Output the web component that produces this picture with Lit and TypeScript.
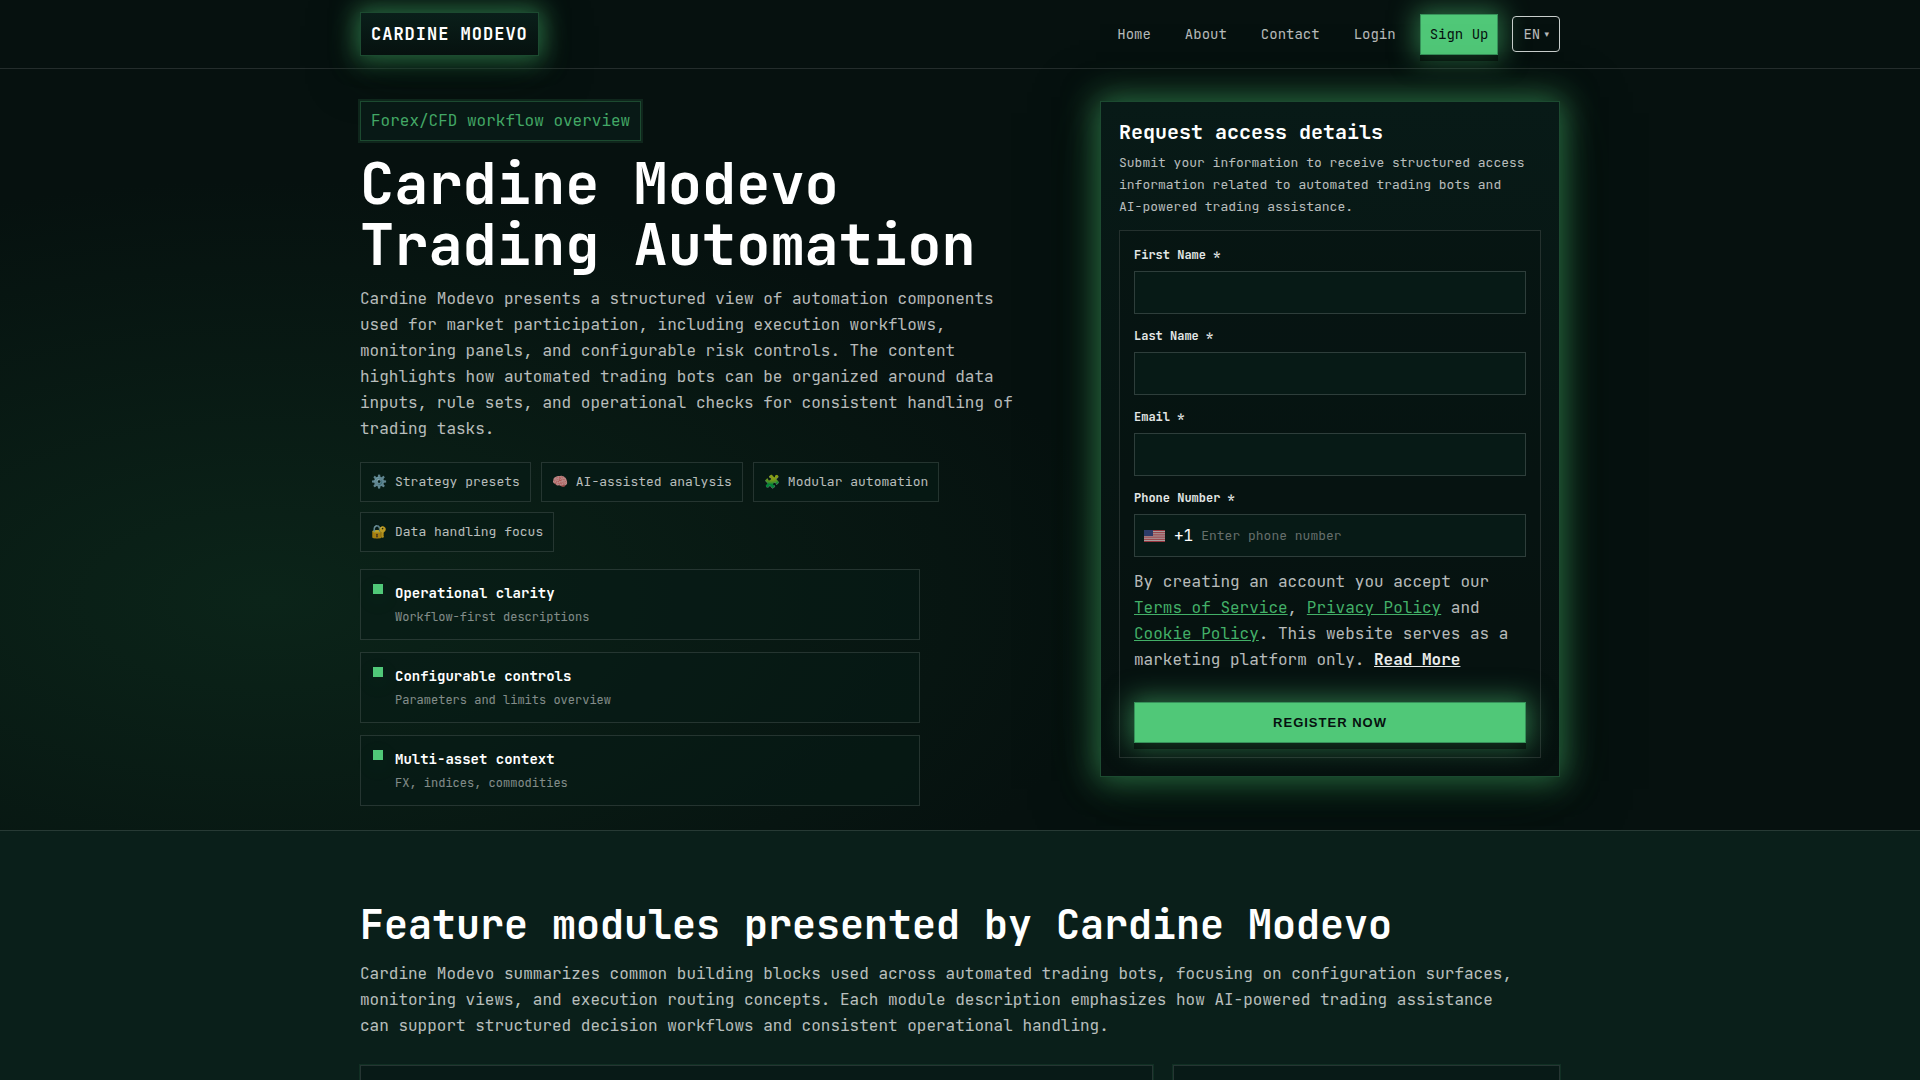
import { LitElement, html, css, svg } from "lit";
import { customElement } from "lit/decorators.js";

const shared = css`
  *,
  *::before,
  *::after {
    box-sizing: border-box;
  }
  h1,
  h2,
  p,
  ul {
    margin: 0;
    padding: 0;
  }
`;

const navLinks = ["Home", "About", "Contact", "Login"];

const chips = [
  { icon: "⚙️", label: "Strategy presets" },
  { icon: "🧠", label: "AI-assisted analysis" },
  { icon: "🧩", label: "Modular automation" },
  { icon: "🔐", label: "Data handling focus" },
];

const points = [
  { title: "Operational clarity", note: "Workflow-first descriptions" },
  { title: "Configurable controls", note: "Parameters and limits overview" },
  { title: "Multi-asset context", note: "FX, indices, commodities" },
];

const fields = [
  { id: "first-name", label: "First Name *", type: "text" },
  { id: "last-name", label: "Last Name *", type: "text" },
  { id: "email", label: "Email *", type: "email" },
];

@customElement("site-header")
class SiteHeader extends LitElement {
  static styles = [
    shared,
    css`
      :host {
        display: block;
        border-bottom: 1px solid var(--line);
        background: rgba(6, 17, 15, 0.5);
      }
      .bar {
        max-width: 1200px;
        margin: 0 auto;
        padding: 12px 0;
        display: flex;
        align-items: center;
        justify-content: space-between;
      }
      .logo {
        padding: 8px 10px;
        border: 1px solid var(--line-green);
        background: linear-gradient(180deg, #0a1f1a, #06110f);
        box-shadow: var(--glow);
        color: #fff;
        font-size: 17px;
        font-weight: 700;
        letter-spacing: 1px;
        text-decoration: none;
      }
      .nav {
        display: flex;
        align-items: center;
        gap: 14px;
        font-size: 14px;
        line-height: 23px;
      }
      .link {
        padding: 8px 9px;
        border: 1px solid transparent;
        color: var(--text);
        text-decoration: none;
      }
      .signup {
        border-color: var(--button-line);
        background: var(--green);
        box-shadow: var(--button-glow);
        color: #06110f;
      }
      .lang {
        display: flex;
        align-items: center;
        gap: 4px;
        height: 36px;
        padding: 0 10px;
        border: 1px solid #c9cfcd;
        border-radius: 4px;
        color: var(--text);
      }
      .select {
        appearance: none;
        padding: 0;
        border: 0;
        background: transparent;
        color: inherit;
        font: inherit;
      }
      .caret {
        font-family: "DejaVu Sans", sans-serif;
        font-size: 9px;
      }
    `,
  ];

  render() {
    return html`
      <header class="bar">
        <a class="logo" href="#">CARDINE MODEVO</a>
        <nav class="nav">
          ${navLinks.map((l) => html`<a class="link" href="#">${l}</a>`)}
          <a class="link signup" href="#">Sign Up</a>
          <label class="lang">
            <select class="select" aria-label="Language">
              <option>EN</option>
            </select>
            <span class="caret">▾</span>
          </label>
        </nav>
      </header>
    `;
  }
}

@customElement("intro-column")
class IntroColumn extends LitElement {
  static styles = [
    shared,
    css`
      :host {
        display: block;
      }
      .badge {
        display: inline-block;
        padding: 6px 10px;
        border: 1px solid var(--line-green);
        outline: 2px solid rgba(80, 200, 120, 0.12);
        background: rgba(10, 31, 26, 0.6);
        color: #43a866;
      }
      .title {
        margin-top: 12px;
        color: #fff;
        font-size: 57px;
        line-height: 61px;
        font-weight: 700;
      }
      .lead {
        max-width: 660px;
        margin-top: 11px;
        color: var(--text);
      }
      .chips {
        display: flex;
        flex-wrap: wrap;
        gap: 10px;
        margin-top: 20px;
        list-style: none;
      }
      .chip {
        display: flex;
        gap: 8px;
        padding: 8px 10px;
        border: 1px solid var(--line);
        background: var(--panel);
        color: var(--text);
        font-size: 13px;
        line-height: 22px;
      }
      .icon {
        width: 16px;
      }
      .points {
        display: grid;
        gap: 12px;
        max-width: 560px;
        margin-top: 17px;
        list-style: none;
      }
      .point {
        display: flex;
        gap: 12px;
        padding: 12px;
        border: 1px solid var(--line);
        background: var(--panel);
      }
      .mark {
        flex: none;
        width: 10px;
        height: 10px;
        margin-top: 2px;
        background: var(--green);
        box-shadow: 0 6px 24px rgba(80, 200, 120, 0.12);
      }
      .name {
        color: #fff;
        font-size: 14px;
        line-height: 23px;
        font-weight: 700;
      }
      .note {
        margin-top: 2px;
        color: var(--muted);
        font-size: 12px;
        line-height: 20px;
      }
    `,
  ];

  render() {
    return html`
      <span class="badge">Forex/CFD workflow overview</span>
      <h1 class="title">Cardine Modevo Trading Automation</h1>
      <p class="lead">
        Cardine Modevo presents a structured view of automation components used for market
        participation, including execution workflows, monitoring panels, and configurable risk
        controls. The content highlights how automated trading bots can be organized around data
        inputs, rule sets, and operational checks for consistent handling of trading tasks.
      </p>
      <ul class="chips">
        ${chips.map(
          (c) => html`<li class="chip"><span class="icon">${c.icon}</span><span>${c.label}</span></li>`
        )}
      </ul>
      <ul class="points">
        ${points.map(
          (p) => html`
            <li class="point">
              <span class="mark"></span>
              <div>
                <p class="name">${p.title}</p>
                <p class="note">${p.note}</p>
              </div>
            </li>
          `
        )}
      </ul>
    `;
  }
}

@customElement("access-form")
class AccessForm extends LitElement {
  static styles = [
    shared,
    css`
      :host {
        display: block;
        padding: 18px;
        border: 1px solid var(--line-green);
        background: linear-gradient(180deg, #081a17, #06110f);
        box-shadow: var(--glow-large);
      }
      .title {
        color: #fff;
        font-size: 20px;
        line-height: 24px;
        font-weight: 700;
      }
      .sub {
        max-width: 410px;
        margin-top: 8px;
        color: var(--text);
        font-size: 13px;
        line-height: 22px;
      }
      .form {
        display: flex;
        flex-direction: column;
        gap: 12px;
        margin-top: 12px;
        padding: 14px;
        border: 1px solid var(--line);
        background: rgba(6, 17, 15, 0.5);
      }
      .field {
        display: flex;
        flex-direction: column;
        gap: 6px;
      }
      .label {
        color: #e3e7e6;
        font-size: 12px;
        line-height: 20px;
        font-weight: 700;
      }
      .input {
        width: 100%;
        height: 43px;
        padding: 0 10px;
        border: 1px solid var(--line-strong);
        background: #071a16;
        color: #fff;
        font: inherit;
        font-size: 13px;
      }
      .phone {
        display: flex;
        align-items: center;
        height: 43px;
        padding: 0 9px;
        border: 1px solid var(--line-strong);
        background: #071a16;
      }
      .flag {
        flex: none;
        margin-right: 9px;
        opacity: 0.7;
      }
      .code {
        margin-right: 8px;
        color: #fff;
      }
      .number {
        flex: 1;
        min-width: 0;
        padding: 0;
        border: 0;
        background: transparent;
        color: #fff;
        font: inherit;
        font-size: 13px;
      }
      .number::placeholder {
        color: #666f6c;
      }
      .terms {
        color: var(--text);
      }
      .policy {
        color: #43b068;
      }
      .more {
        color: #e9eceb;
        font-weight: 700;
      }
      .submit {
        height: 41px;
        margin-top: 17px;
        border: 1px solid var(--button-line);
        background: var(--green);
        box-shadow: var(--button-glow);
        color: #06110f;
        font-family: "Liberation Sans", Arial, sans-serif;
        font-size: 13px;
        font-weight: 700;
        letter-spacing: 1px;
      }
    `,
  ];

  private flag() {
    return html`
      <svg class="flag" width="21" height="12" viewBox="0 0 21 12" role="img" aria-label="United States">
        <rect width="21" height="12" fill="#f4f4f4" />
        ${[0, 1, 2, 3, 4, 5, 6].map(
          (i) => svg`<rect y=${(i * 24) / 13} width="21" height=${12 / 13} fill="#d0303f" />`
        )}
        <rect width="9" height="6" fill="#3c4a8c" />
      </svg>
    `;
  }

  render() {
    return html`
      <h2 class="title">Request access details</h2>
      <p class="sub">
        Submit your information to receive structured access information related to automated
        trading bots and AI-powered trading assistance.
      </p>
      <form class="form">
        ${fields.map(
          (f) => html`
            <div class="field">
              <label class="label" for=${f.id}>${f.label}</label>
              <input class="input" id=${f.id} type=${f.type} />
            </div>
          `
        )}
        <div class="field">
          <label class="label" for="phone">Phone Number *</label>
          <div class="phone">
            ${this.flag()}
            <span class="code">+1</span>
            <input class="number" id="phone" type="tel" placeholder="Enter phone number" />
          </div>
        </div>
        <p class="terms">
          By creating an account you accept our <a class="policy" href="#">Terms of Service</a>,
          <a class="policy" href="#">Privacy Policy</a> and
          <a class="policy" href="#">Cookie Policy</a>. This website serves as a marketing platform
          only. <a class="more" href="#">Read More</a>
        </p>
        <button class="submit" type="button">REGISTER NOW</button>
      </form>
    `;
  }
}

@customElement("feature-section")
class FeatureSection extends LitElement {
  static styles = [
    shared,
    css`
      :host {
        display: block;
        position: relative;
        border-top: 1px solid var(--line);
        background: #0a1f1a;
      }
      .inner {
        max-width: 1200px;
        margin: 0 auto;
        padding: 70px 0;
      }
      .title {
        color: #fff;
        font-size: 40px;
        line-height: 48px;
        font-weight: 700;
      }
      .text {
        max-width: 1160px;
        margin-top: 12px;
        color: var(--text);
      }
      .grid {
        display: grid;
        grid-template-columns: repeat(12, 1fr);
        gap: 20px;
        margin-top: 26px;
      }
      .card {
        min-height: 220px;
        border: 1px solid var(--line);
        outline: 1px solid rgba(80, 200, 120, 0.1);
        background: #081a17;
      }
      .wide {
        grid-column: span 8;
      }
      .narrow {
        grid-column: span 4;
      }
    `,
  ];

  render() {
    return html`
      <section class="inner">
        <h2 class="title">Feature modules presented by Cardine Modevo</h2>
        <p class="text">
          Cardine Modevo summarizes common building blocks used across automated trading bots,
          focusing on configuration surfaces, monitoring views, and execution routing concepts. Each
          module description emphasizes how AI-powered trading assistance can support structured
          decision workflows and consistent operational handling.
        </p>
        <div class="grid">
          <div class="card wide"></div>
          <div class="card narrow"></div>
        </div>
      </section>
    `;
  }
}

@customElement("app-root")
class AppRoot extends LitElement {
  static styles = [
    shared,
    css`
      :host {
        --green: #50c878;
        --text: rgba(255, 255, 255, 0.72);
        --muted: rgba(255, 255, 255, 0.5);
        --line: rgba(255, 255, 255, 0.12);
        --line-strong: rgba(255, 255, 255, 0.16);
        --line-green: #1c4a30;
        --button-line: #37915a;
        --panel: rgba(7, 26, 22, 0.6);
        --glow: 0 0 24px 4px rgba(80, 200, 120, 0.5), 0 12px 50px rgba(0, 20, 10, 0.7);
        --glow-large: 0 0 30px 4px rgba(80, 200, 120, 0.5), 0 12px 60px rgba(0, 20, 10, 0.8);
        --button-glow: 0 6px 0 rgba(0, 0, 0, 0.45), 0 0 26px 4px rgba(80, 200, 120, 0.5);
        display: block;
        height: 100vh;
        overflow: hidden;
        background: radial-gradient(ellipse 860px 420px at 14% 600px, #0b2419, rgba(6, 17, 15, 0)),
          #06110f;
        color: #fff;
        font-family: "JetBrains Mono", "DejaVu Sans Mono", "Liberation Mono", monospace;
        font-size: 16px;
        line-height: 26px;
      }
      .hero {
        display: grid;
        grid-template-columns: minmax(0, 1fr) 460px;
        align-items: start;
        gap: 40px;
        max-width: 1200px;
        margin: 0 auto;
        padding: 32px 0 24px;
      }
    `,
  ];

  render() {
    return html`
      <site-header></site-header>
      <main>
        <div class="hero">
          <intro-column></intro-column>
          <access-form></access-form>
        </div>
        <feature-section></feature-section>
      </main>
    `;
  }
}
